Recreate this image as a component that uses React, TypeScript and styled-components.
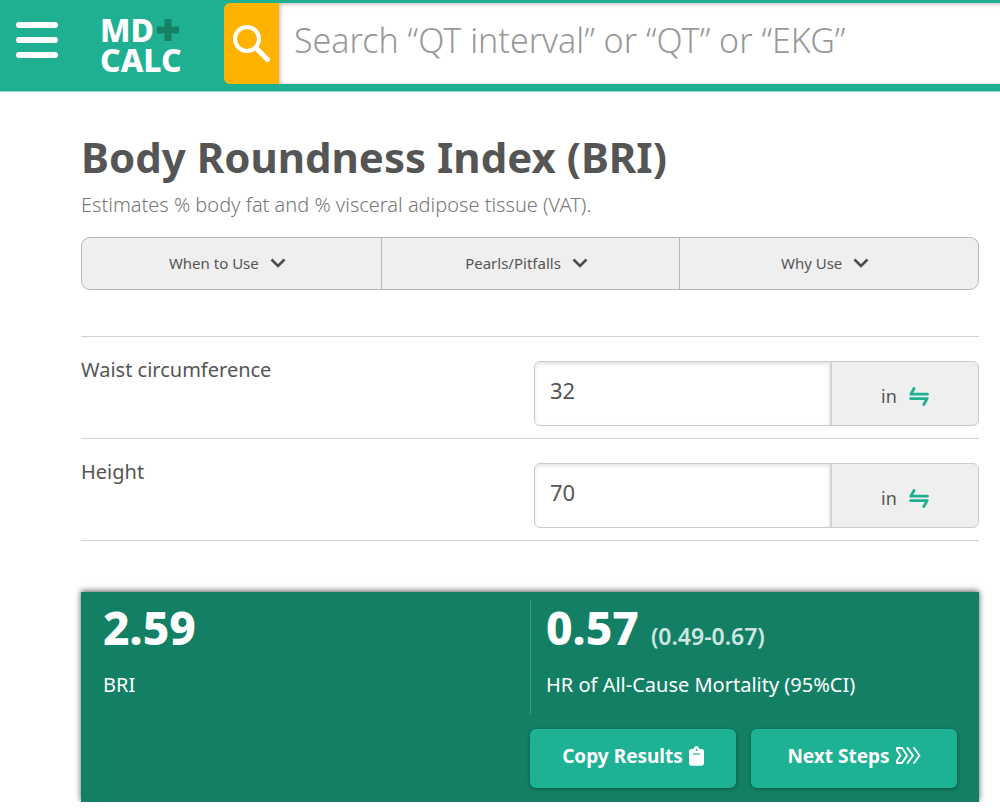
import React, { useState } from "react";
import styled, { createGlobalStyle } from "styled-components";

const GlobalStyle = createGlobalStyle`
  *, *::before, *::after { box-sizing: border-box; }
  body {
    margin: 0;
    background: #fff;
    color: #555;
    font-family: "Noto Sans", "Open Sans", sans-serif;
  }
  button, input { font: inherit; color: inherit; }
  h1, h2, p { margin: 0; }
`;

const Header = styled.header`
  display: flex;
  align-items: flex-start;
  height: 92px;
  padding: 3px 0 8px 16px;
  overflow: hidden;
  background: #1fb092;
  border-bottom: 1px solid #8fd8c9;
`;

const MenuButton = styled.button`
  display: flex;
  flex: none;
  flex-direction: column;
  gap: 9px;
  width: 42px;
  margin-top: 19px;
  padding: 0;
  border: 0;
  background: none;
  cursor: pointer;
`;

const MenuBar = styled.span`
  height: 6px;
  border-radius: 3px;
  background: #fff;
`;

const Logo = styled.a`
  flex: none;
  width: 122px;
  margin-top: 12px;
  padding-left: 42px;
  color: #fff;
  font-size: 32px;
  font-weight: 800;
  line-height: 30px;
  text-decoration: none;
`;

const LogoLine = styled.span`
  display: flex;
  align-items: center;
  gap: 3px;
`;

const SearchForm = styled.form`
  display: flex;
  flex: 1;
  min-width: 0;
  height: 81px;
  margin: 0 -8px 0 44px;
`;

const SearchButton = styled.button`
  display: flex;
  flex: none;
  align-items: center;
  justify-content: center;
  width: 55px;
  padding: 0;
  border: 0;
  border-radius: 6px 0 0 6px;
  background: #ffb300;
  cursor: pointer;
`;

const SearchInput = styled.input`
  flex: 1;
  min-width: 0;
  padding: 0 15px 7px;
  border: 0;
  border-radius: 0;
  outline: 0;
  background: #fff;
  box-shadow: inset 1px 1px 4px rgba(0, 0, 0, 0.3);
  font-size: 34px;
  font-weight: 300;
  &::placeholder { color: #999; opacity: 1; }
`;

const Main = styled.main`
  padding: 31px 21px 7px 81px;
`;

const Title = styled.h1`
  font-size: 42px;
  font-weight: 700;
  line-height: 68px;
`;

const Subtitle = styled.p`
  color: #777;
  font-size: 20px;
  font-weight: 300;
  line-height: 28px;
`;

const Tabs = styled.div`
  display: grid;
  grid-template-columns: repeat(3, 1fr);
  height: 53px;
  margin: 18px 0 46px;
  overflow: hidden;
  border: 1px solid #b8b8b8;
  border-radius: 9px;
  background: #efefef;
`;

const TabButton = styled.button`
  display: flex;
  align-items: center;
  justify-content: center;
  gap: 11px;
  padding: 0 8px 1px 0;
  border: 0;
  background: none;
  font-size: 15px;
  cursor: pointer;
  & + & { border-left: 1px solid #b8b8b8; }
`;

const Fields = styled.div`
  border-top: 1px solid #d2d2d2;
`;

const Field = styled.div`
  display: grid;
  grid-template-columns: 1fr 1fr;
  gap: 8px;
  padding: 24px 0 12px;
  border-bottom: 1px solid #d2d2d2;
`;

const FieldLabel = styled.label`
  margin-top: -5px;
  font-size: 20px;
  line-height: 28px;
`;

const Control = styled.div`
  display: grid;
  grid-template-columns: 1fr 33%;
  height: 65px;
  overflow: hidden;
  border: 1px solid #cbcbcb;
  border-radius: 6px;
  background: #efefef;
`;

const ValueInput = styled.input`
  min-width: 0;
  padding: 0 15px 7px;
  border: 0;
  border-radius: 0;
  border-right: 2px solid #d2d2d2;
  outline: 0;
  background: #fff;
  box-shadow: inset 0 2px 4px rgba(0, 0, 0, 0.12);
  font-size: 22px;
`;

const UnitButton = styled.button`
  display: flex;
  align-items: center;
  justify-content: center;
  gap: 12px;
  padding: 4px 0 0;
  border: 0;
  background: none;
  font-size: 18px;
  cursor: pointer;
`;

const Results = styled.section`
  margin-top: 51px;
  padding: 8px 22px 14px;
  background: #138066;
  box-shadow: 0 -1px 6px rgba(0, 0, 0, 0.65);
  clip-path: inset(-10px -10px 0 -10px);
  color: #fff;
`;

const Scores = styled.div`
  display: grid;
  grid-template-columns: 1fr 1fr;
  height: 114px;
`;

const Score = styled.div<{ $divided?: boolean }>`
  padding-left: ${(p) => (p.$divided ? "15px" : "0")};
  border-left: ${(p) => (p.$divided ? "1px solid #45997f" : "0")};
`;

const ScoreValue = styled.h2`
  font-size: 46px;
  font-weight: 800;
  line-height: 54px;
`;

const Interval = styled.span`
  margin-left: 12px;
  color: #cfe6e0;
  font-size: 23px;
  font-weight: 600;
  line-height: 28px;
`;

const ScoreLabel = styled.p`
  margin-top: 17px;
  font-size: 20px;
  line-height: 28px;
`;

const Actions = styled.div`
  display: grid;
  grid-template-columns: 1fr 1fr;
  gap: 15px;
  margin: 15px 0 0 50%;
`;

const ActionButton = styled.button`
  display: flex;
  align-items: center;
  justify-content: center;
  gap: 6px;
  height: 59px;
  padding: 0 0 6px;
  border: 0;
  border-radius: 6px;
  background: #1eb295;
  box-shadow: 0 1px 4px rgba(0, 0, 0, 0.35);
  color: #fff;
  font-size: 19px;
  font-weight: 700;
  white-space: nowrap;
  cursor: pointer;
`;

const PlusIcon = () => (
  <svg width="22" height="22" viewBox="0 0 22 22" aria-hidden="true">
    <path d="M7.500 0h7v7.500H22v7h-7.500V22h-7v-7.500H0v-7h7.500z" fill="#148064" />
  </svg>
);

const SearchIcon = () => (
  <svg width="37" height="37" viewBox="0 0 37 37" fill="none" stroke="#fff" aria-hidden="true">
    <circle cx="14" cy="14" r="12" strokeWidth="4" />
    <path d="M23 23 34.5 34.5" strokeWidth="5" strokeLinecap="round" />
  </svg>
);

const ChevronIcon = () => (
  <svg width="16" height="10" viewBox="0 0 16 10" fill="none" aria-hidden="true">
    <path d="M1.5 1.5 8 8 14.500 1.500" stroke="#4c4c4c" strokeWidth="2.600" />
  </svg>
);

const SwapIcon = () => (
  <svg width="20" height="20" viewBox="0 0 20 20" fill="none" stroke="#1fb092" strokeWidth="2.800" strokeLinecap="round" strokeLinejoin="round" aria-hidden="true">
    <path d="M5 2.500 1.800 8.200H18.500" />
    <path d="M1.500 12.600H18.200L14.800 18.500" />
  </svg>
);

const ClipboardIcon = () => (
  <svg width="15" height="20" viewBox="0 0 15 20" aria-hidden="true">
    <path d="M2.800 3H4.500Q5.500 0 7.500 0T10.500 3H12.200Q15 3 15 5.800V17Q15 19.800 12.200 19.800H2.800Q0 19.800 0 17V5.800Q0 3 2.800 3Z" fill="#fff" />
    <path d="M4 8H11" stroke="#1eb295" strokeWidth="1.200" />
    <circle cx="7.500" cy="4" r="1" fill="#1eb295" />
  </svg>
);

const StepsIcon = () => (
  <svg width="25" height="17" viewBox="0 0 25 17" fill="none" stroke="#fff" strokeWidth="1.900" strokeLinejoin="round" strokeLinecap="round" aria-hidden="true">
    <path d="M1 1H6L11 8.500 6 16H1V13.500L4.500 8.500 1 3.500Z" />
    <path d="M11.500 1 17 8.500 11.500 16" />
    <path d="M18 1 23.500 8.500 18 16" />
  </svg>
);

const tabs = ["When to Use", "Pearls/Pitfalls", "Why Use"];

function Measurement({ id, label, initial }: { id: string; label: string; initial: string }) {
  const [value, setValue] = useState(initial);
  return (
    <Field>
      <FieldLabel htmlFor={id}>{label}</FieldLabel>
      <Control>
        <ValueInput id={id} inputMode="decimal" value={value} onChange={(e) => setValue(e.target.value)} />
        <UnitButton type="button">
          in <SwapIcon />
        </UnitButton>
      </Control>
    </Field>
  );
}

export default function App() {
  return (
    <>
      <GlobalStyle />
      <Header>
        <MenuButton type="button" aria-label="Menu">
          <MenuBar />
          <MenuBar />
          <MenuBar />
        </MenuButton>
        <Logo href="#">
          <LogoLine>
            MD
            <PlusIcon />
          </LogoLine>
          <LogoLine>CALC</LogoLine>
        </Logo>
        <SearchForm role="search" onSubmit={(e) => e.preventDefault()}>
          <SearchButton type="submit" aria-label="Search">
            <SearchIcon />
          </SearchButton>
          <SearchInput type="text" aria-label="Search calculators" placeholder="Search “QT interval” or “QT” or “EKG”" />
        </SearchForm>
      </Header>
      <Main>
        <Title>Body Roundness Index (BRI)</Title>
        <Subtitle>Estimates % body fat and % visceral adipose tissue (VAT).</Subtitle>
        <Tabs>
          {tabs.map((tab) => (
            <TabButton type="button" key={tab}>
              {tab}
              <ChevronIcon />
            </TabButton>
          ))}
        </Tabs>
        <Fields>
          <Measurement id="waist" label="Waist circumference" initial="32" />
          <Measurement id="height" label="Height" initial="70" />
        </Fields>
        <Results>
          <Scores>
            <Score>
              <ScoreValue>2.59</ScoreValue>
              <ScoreLabel>BRI</ScoreLabel>
            </Score>
            <Score $divided>
              <ScoreValue>
                0.57
                <Interval>(0.49-0.67)</Interval>
              </ScoreValue>
              <ScoreLabel>HR of All-Cause Mortality (95%CI)</ScoreLabel>
            </Score>
          </Scores>
          <Actions>
            <ActionButton type="button">
              Copy Results <ClipboardIcon />
            </ActionButton>
            <ActionButton type="button">
              Next Steps <StepsIcon />
            </ActionButton>
          </Actions>
        </Results>
      </Main>
    </>
  );
}
